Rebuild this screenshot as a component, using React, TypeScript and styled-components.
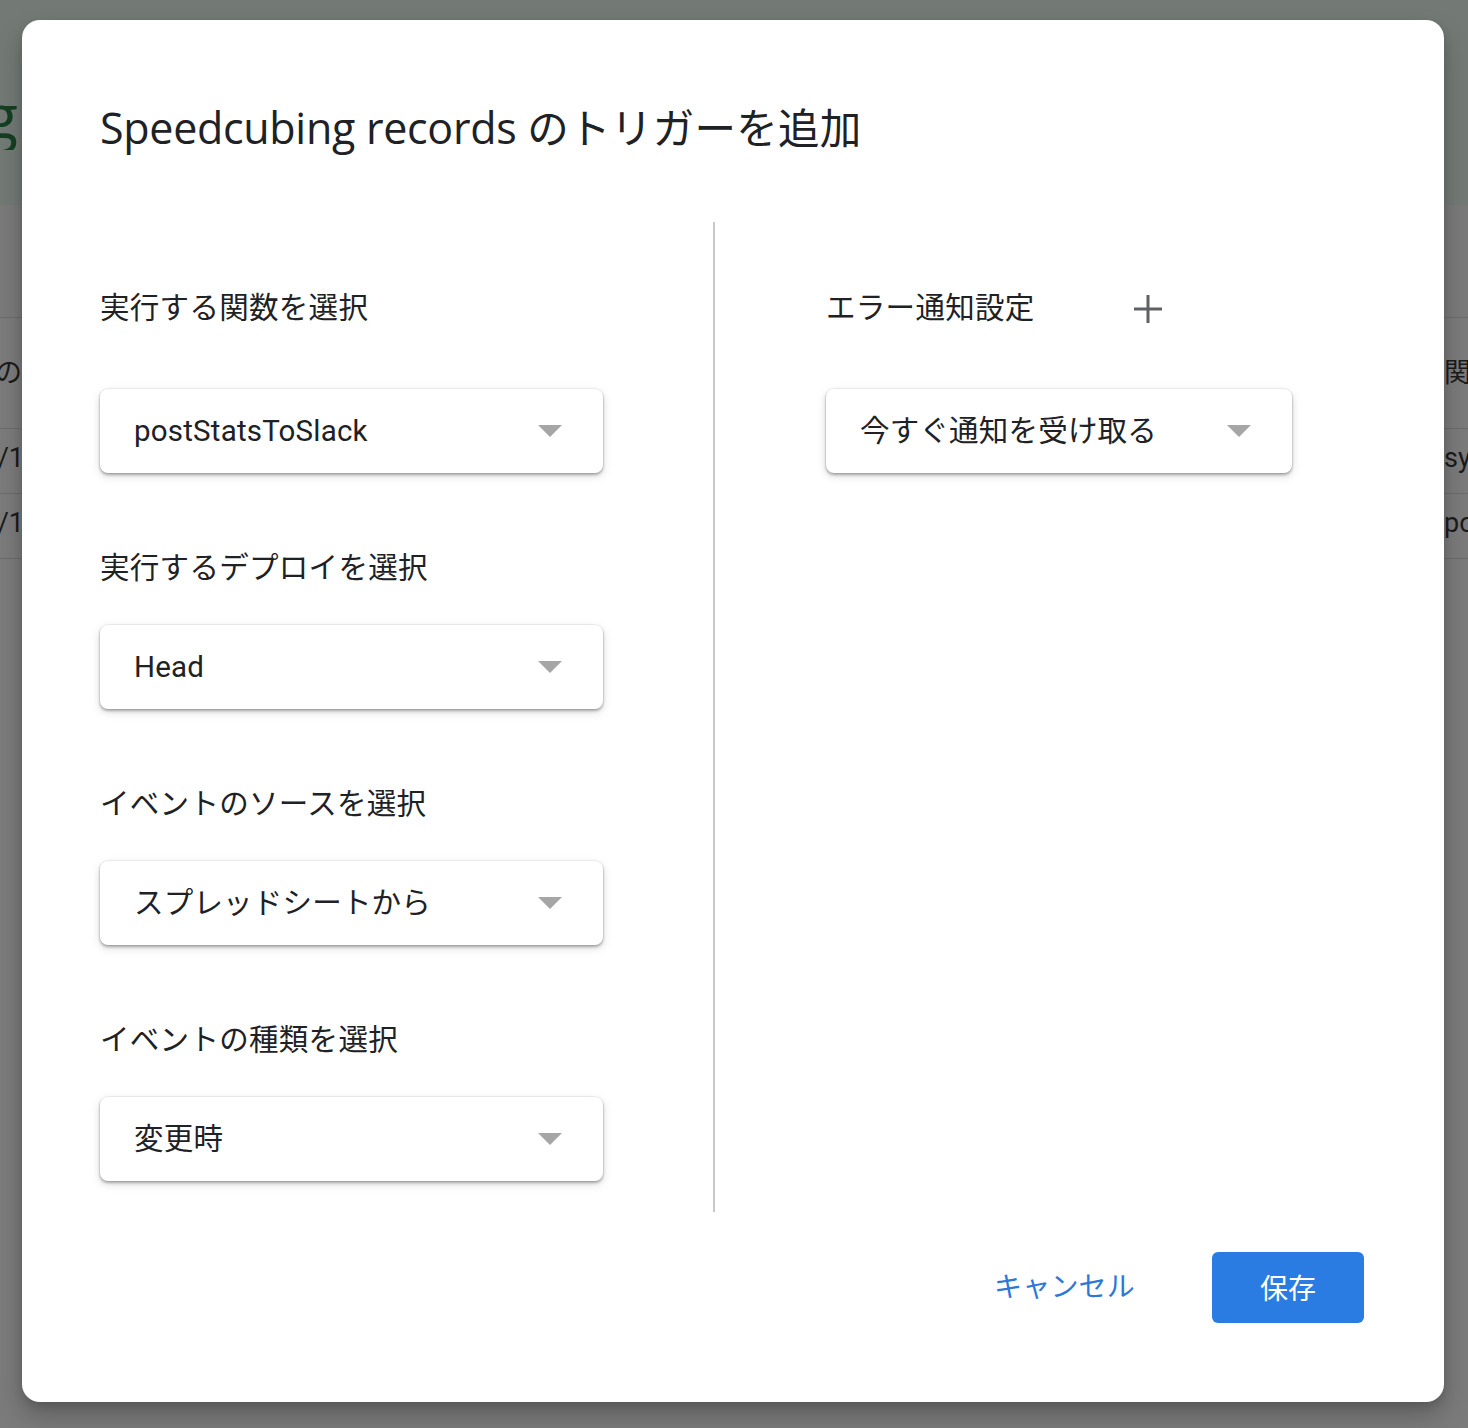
import React from "react";
import styled, { createGlobalStyle } from "styled-components";

const Global = createGlobalStyle`
  html, body { margin: 0; padding: 0; }
  body { font-family: Roboto, "Noto Sans CJK JP", sans-serif; }
  * { box-sizing: border-box; }
`;

const Page = styled.div`
  position: relative;
  width: 1468px;
  height: 1428px;
  overflow: hidden;
  background: #7b7b7b;
  display: flex;
  flex-direction: column;
`;

const Header = styled.div`
  height: 205px;
  background: #737a76;
  display: flex;
  align-items: flex-start;
  padding-top: 80px;
`;

const Clip = styled.div<{ $w: number; $end?: boolean }>`
  width: ${(p) => p.$w}px;
  overflow: hidden;
  display: flex;
  justify-content: ${(p) => (p.$end ? "flex-end" : "flex-start")};
  white-space: nowrap;
`;

const AppName = styled.span`
  font-family: "Open Sans", sans-serif;
  font-size: 62px;
  line-height: 70px;
  color: #143f22;
`;

const Spacer = styled.div`
  height: 112px;
  background: #7a7a7a;
`;

const Row = styled.div<{ $h: number }>`
  height: ${(p) => p.$h}px;
  border-top: 1px solid #6c6c6c;
  display: flex;
  align-items: center;
  justify-content: space-between;
  padding-bottom: 6px;
`;

const BgText = styled.span`
  font-family: Roboto, "Noto Sans CJK JP", sans-serif;
  font-size: 27px;
  color: #1b1b1b;
`;

const Dialog = styled.div`
  position: absolute;
  left: 22px;
  top: 20px;
  width: 1422px;
  background: #ffffff;
  border-radius: 18px;
  box-shadow: 0 14px 26px rgba(0, 0, 0, 0.22), 0 4px 10px rgba(0, 0, 0, 0.12);
  padding: 78px 80px 79px 78px;
  display: flex;
  flex-direction: column;
`;

const Title = styled.h1`
  margin: 0;
  height: 56px;
  font-family: "Open Sans", "Noto Sans CJK JP", sans-serif;
  font-weight: 500;
  font-size: 43px;
  line-height: 56px;
  color: #202124;
  letter-spacing: -0.3px;
  white-space: nowrap;
`;

const TitleJa = styled.span`
  font-family: "Noto Sans CJK JP", sans-serif;
  font-weight: 400;
  font-size: 41.5px;
  letter-spacing: 0.3px;
`;

const Columns = styled.div`
  margin-top: 68px;
  display: flex;
`;

const Column = styled.div<{ $divider?: boolean }>`
  display: flex;
  flex-direction: column;
  padding: 63px 0 31px ${(p) => (p.$divider ? 0 : 111)}px;
  width: ${(p) => (p.$divider ? "615px" : "auto")};
  border-right: ${(p) => (p.$divider ? "2px solid #c9c9c9" : "none")};
`;

const Field = styled.div<{ $gap: number; $last?: boolean }>`
  display: flex;
  flex-direction: column;
  gap: ${(p) => p.$gap}px;
  margin-bottom: ${(p) => (p.$last ? 0 : 72)}px;
`;

const LabelRow = styled.div`
  display: flex;
  align-items: center;
  gap: 98px;
`;

const Label = styled.div`
  font-family: "Noto Sans CJK JP", sans-serif;
  font-size: 29.5px;
  line-height: 40px;
  color: #202124;
  letter-spacing: 0.3px;
`;

const PlusButton = styled.button`
  border: none;
  background: transparent;
  padding: 0;
  width: 30px;
  height: 30px;
  display: flex;
  align-items: center;
  justify-content: center;
  margin-top: 8px;
`;

const Select = styled.div<{ $w: number }>`
  width: ${(p) => p.$w}px;
  height: 84px;
  border-radius: 8px;
  background: #fff;
  box-shadow: 0 0 0 1px rgba(0, 0, 0, 0.05), 0 2px 3px rgba(0, 0, 0, 0.28),
    0 3px 10px rgba(0, 0, 0, 0.14);
  display: flex;
  align-items: center;
  justify-content: space-between;
  padding: 0 41px 0 34px;
`;

const SelectText = styled.span<{ $ja?: boolean }>`
  font-family: Roboto, "Noto Sans CJK JP", sans-serif;
  font-size: 29.5px;
  color: #202124;
  letter-spacing: 0.2px;
  margin-top: ${(p) => (p.$ja ? -6 : 0)}px;
`;

const Arrow = styled.span`
  width: 0;
  height: 0;
  border-left: 12px solid transparent;
  border-right: 12px solid transparent;
  border-top: 12px solid #a6a6a6;
`;

const Actions = styled.div`
  margin-top: 40px;
  display: flex;
  justify-content: flex-end;
  align-items: center;
  gap: 53px;
`;

const TextButton = styled.button`
  border: none;
  background: transparent;
  padding: 0 24px;
  height: 71px;
  font-family: "Noto Sans CJK JP", sans-serif;
  font-size: 28px;
  color: #2c78d8;
  letter-spacing: 0.2px;
  margin-top: -6px;
`;

const PrimaryButton = styled.button`
  border: none;
  background: #2a7ce2;
  border-radius: 6px;
  width: 152px;
  height: 71px;
  font-family: "Noto Sans CJK JP", sans-serif;
  font-size: 28px;
  color: #fff;
  padding-bottom: 2px;
`;

const Plus = () => (
  <svg width="30" height="30" viewBox="0 0 30 30">
    <path d="M15 1v28M1 15h28" stroke="#5f6164" strokeWidth="3" />
  </svg>
);

const Dropdown = ({ text, w, ja }: { text: string; w: number; ja?: boolean }) => (
  <Select $w={w}>
    <SelectText $ja={ja}>{text}</SelectText>
    <Arrow />
  </Select>
);

const leftFields = [
  { label: "実行する関数を選択", value: "postStatsToSlack", gap: 64, ja: false },
  { label: "実行するデプロイを選択", value: "Head", gap: 40, ja: false },
  { label: "イベントのソースを選択", value: "スプレッドシートから", gap: 40, ja: true },
  { label: "イベントの種類を選択", value: "変更時", gap: 40, ja: true },
];

export default function App() {
  return (
    <>
      <Global />
      <Page>
        <Header>
          <Clip $w={18} $end>
            <AppName>ng</AppName>
          </Clip>
        </Header>
        <Spacer />
        <Row $h={111}>
          <Clip $w={22} $end>
            <BgText>の</BgText>
          </Clip>
          <Clip $w={24}>
            <BgText>関数</BgText>
          </Clip>
        </Row>
        <Row $h={65}>
          <Clip $w={24} $end>
            <BgText>es/1</BgText>
          </Clip>
          <Clip $w={24}>
            <BgText>sync</BgText>
          </Clip>
        </Row>
        <Row $h={65}>
          <Clip $w={24} $end>
            <BgText>es/1</BgText>
          </Clip>
          <Clip $w={24}>
            <BgText>post</BgText>
          </Clip>
        </Row>
        <Row $h={40} />

        <Dialog role="dialog">
          <Title>
            Speedcubing records <TitleJa>のトリガーを追加</TitleJa>
          </Title>
          <Columns>
            <Column $divider>
              {leftFields.map((f, i) => (
                <Field key={f.label} $gap={f.gap} $last={i === leftFields.length - 1}>
                  <Label>{f.label}</Label>
                  <Dropdown text={f.value} w={503} ja={f.ja} />
                </Field>
              ))}
            </Column>
            <Column>
              <Field $gap={64} $last>
                <LabelRow>
                  <Label>エラー通知設定</Label>
                  <PlusButton aria-label="追加">
                    <Plus />
                  </PlusButton>
                </LabelRow>
                <Dropdown text="今すぐ通知を受け取る" w={466} ja />
              </Field>
            </Column>
          </Columns>
          <Actions>
            <TextButton>キャンセル</TextButton>
            <PrimaryButton>保存</PrimaryButton>
          </Actions>
        </Dialog>
      </Page>
    </>
  );
}
